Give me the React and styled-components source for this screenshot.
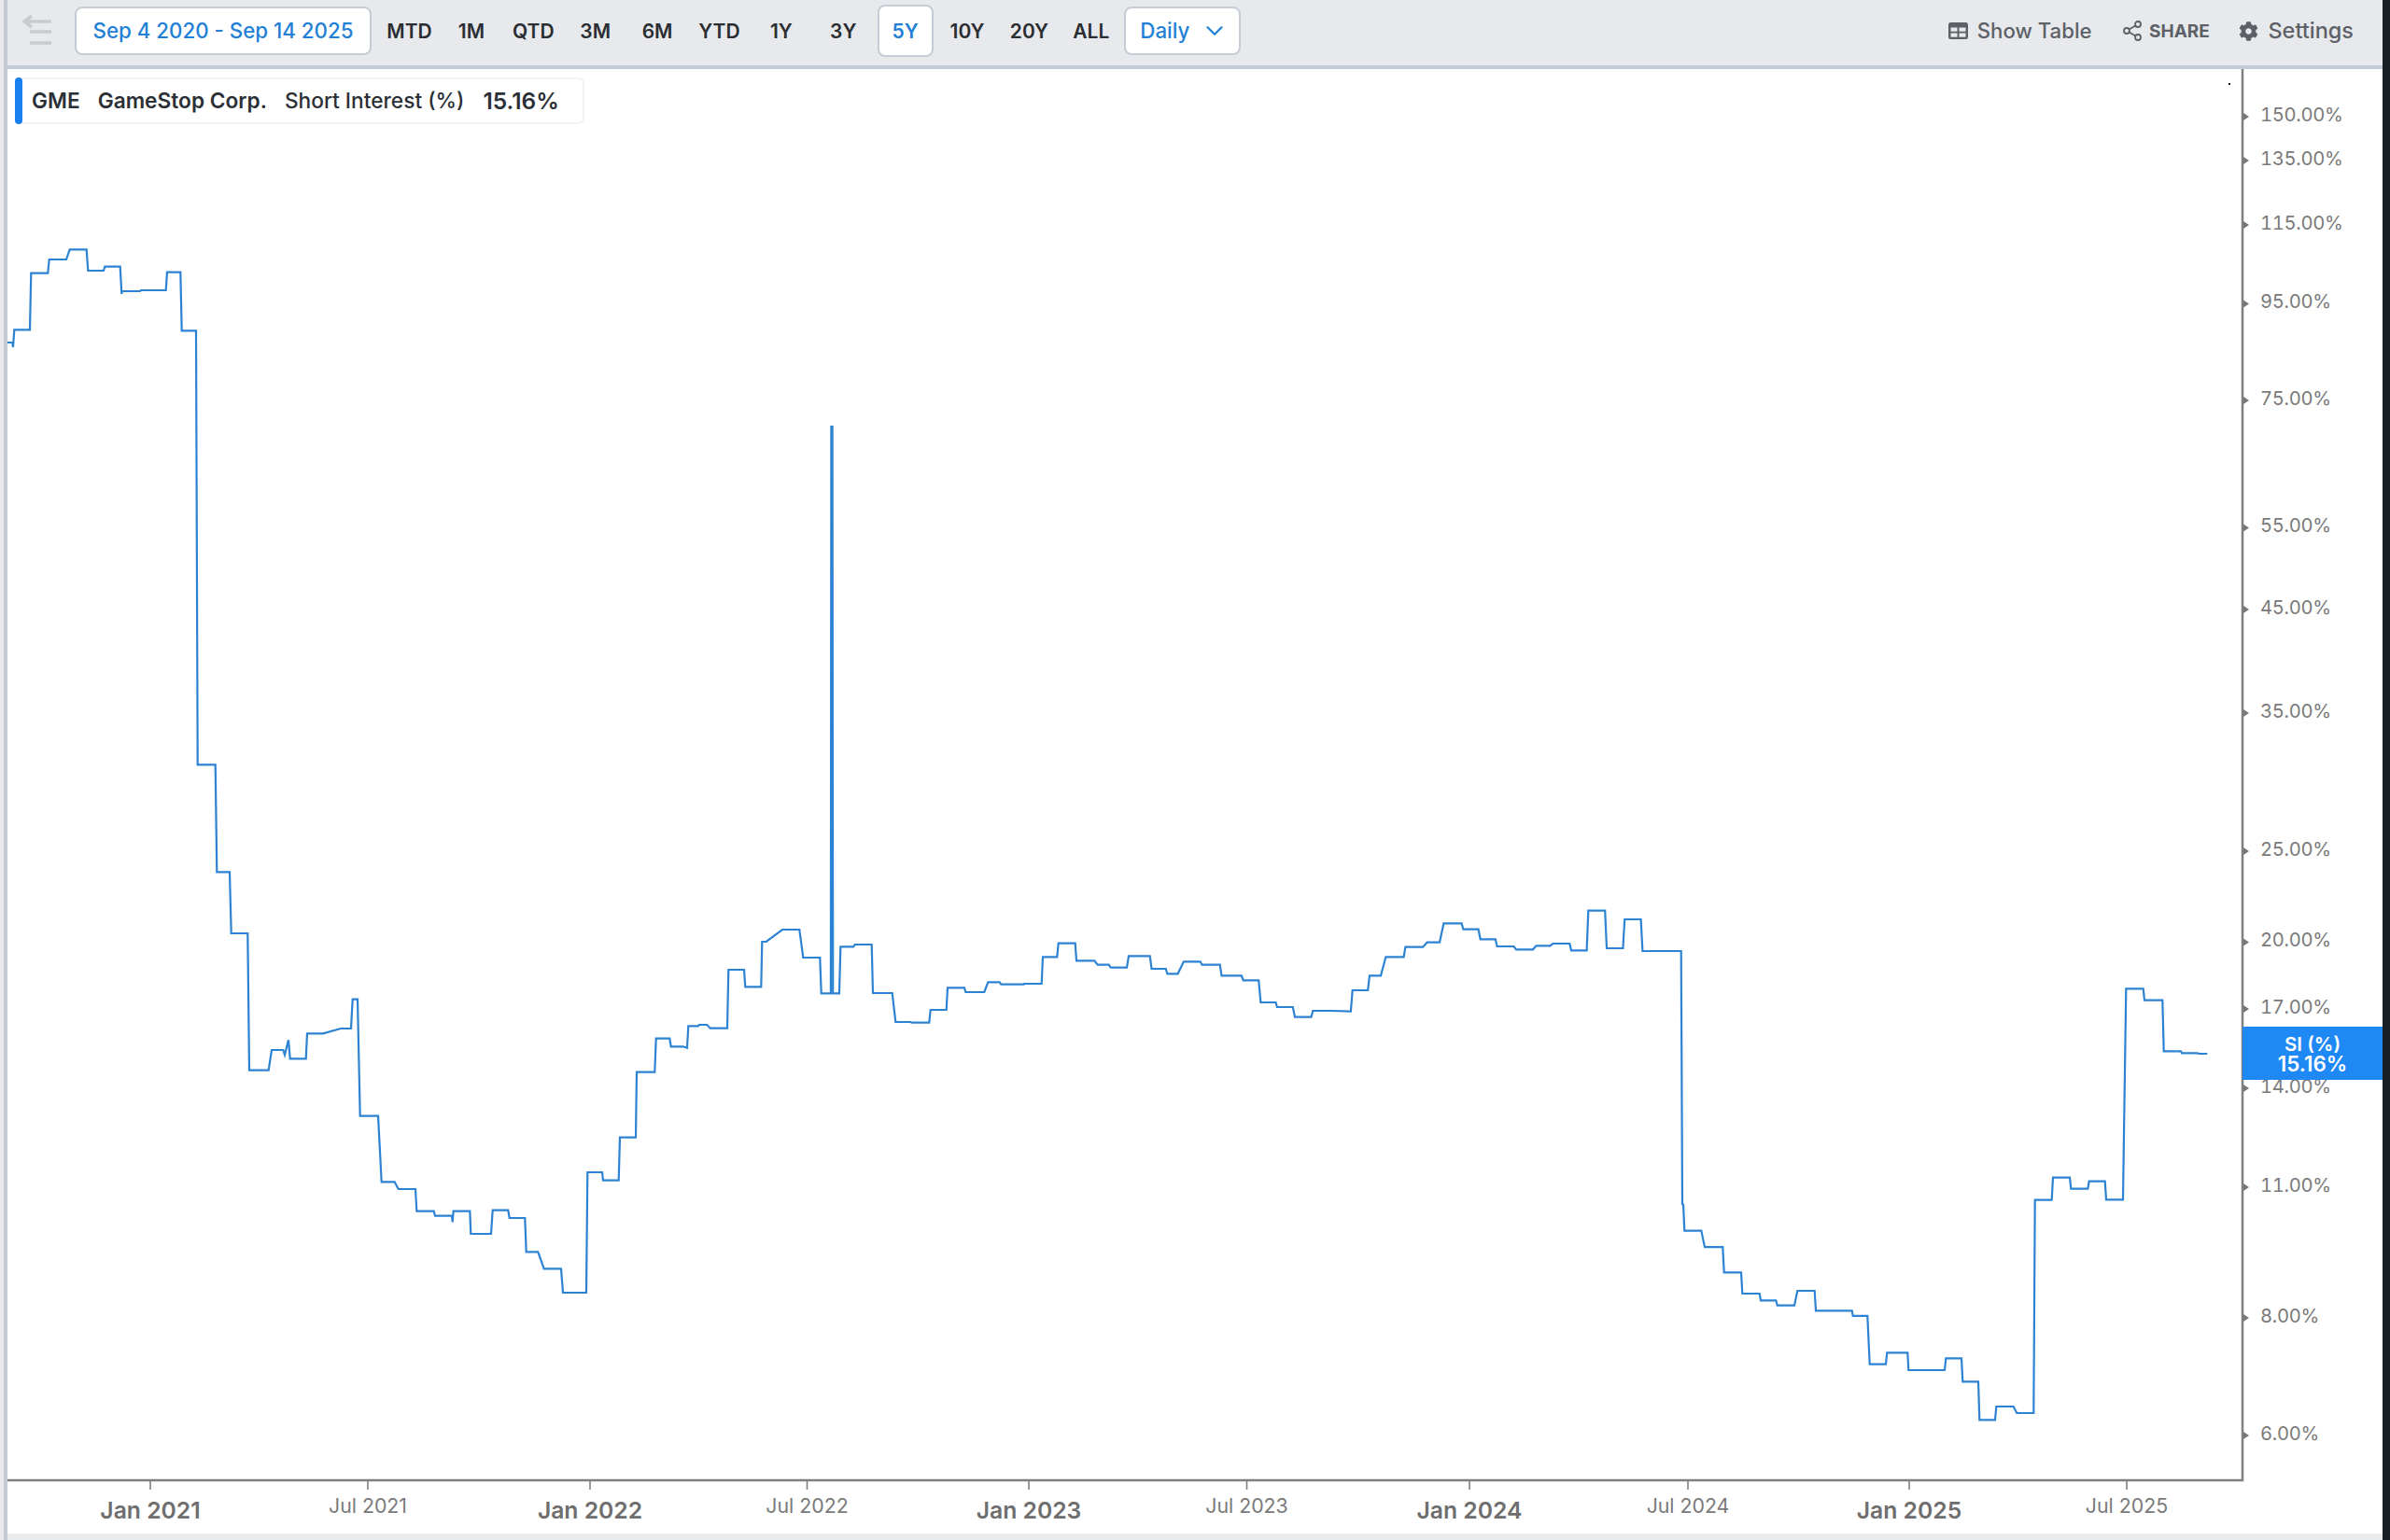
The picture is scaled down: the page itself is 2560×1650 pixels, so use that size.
import React from "react";
import styled, { createGlobalStyle } from "styled-components";
import { Share2, ChevronDown } from "lucide-react";
import { FaCog } from "react-icons/fa";

const Global = createGlobalStyle`
  html, body { margin: 0; padding: 0; background: #fff; }
  body { font-family: Inter, "Liberation Sans", sans-serif; }
  * { box-sizing: border-box; }
`;

const Page = styled.div`
  width: 2560px;
  height: 1650px;
  display: grid;
  grid-template-columns: 8px 1fr 8px;
  overflow: hidden;
`;
const LeftRail = styled.div`
  background: #e7e9ec;
  border-right: 4px solid #c3cad6;
`;
const RightEdge = styled.div`
  background: #1b2025;
`;
const Main = styled.main`
  display: flex;
  flex-direction: column;
  min-width: 0;
`;
const Toolbar = styled.header`
  flex: 0 0 74px;
  display: flex;
  align-items: center;
  padding: 0 31px 4px 15px;
  background: #e7e9ec;
  border-bottom: 4px solid #c3cad6;
`;
const BackIcon = styled.svg`
  width: 32px;
  height: 34px;
  margin-right: 25px;
  flex: none;
`;
const PillButton = styled.button`
  height: 52px;
  padding: 0;
  display: flex;
  align-items: center;
  justify-content: center;
  background: #fff;
  border: 2px solid #c6ccd5;
  border-radius: 8px;
  color: #1f80d6;
  font: 500 22.3px/1 Inter, "Liberation Sans", sans-serif;
  flex: none;
`;
const DateButton = styled(PillButton)`
  width: 318px;
  margin-right: 10.5px;
`;
const IntervalButton = styled(PillButton)`
  width: 125px;
  margin-left: 5.5px;
  gap: 12px;
  padding-left: 15px;
  justify-content: flex-start;
`;
const Periods = styled.div`
  display: flex;
  gap: 6.4px;
  align-items: center;
`;
const Period = styled.button`
  width: 60px;
  height: 56px;
  padding: 0;
  background: ${(p) => (p.$active ? "#fff" : "transparent")};
  border: 2px solid ${(p) => (p.$active ? "#c6ccd5" : "transparent")};
  border-radius: 8px;
  color: ${(p) => (p.$active ? "#1f80d6" : "#2a2d31")};
  font: 600 21px/1 Inter, "Liberation Sans", sans-serif;
  white-space: nowrap;
  display: flex;
  align-items: center;
  justify-content: center;
`;
const Actions = styled.div`
  margin-left: auto;
  display: flex;
  align-items: center;
  gap: 31.5px;
`;
const Action = styled.button`
  display: flex;
  align-items: center;
  gap: ${(p) => p.$gap || 10}px;
  padding: 0;
  background: none;
  border: 0;
  color: #5d6167;
  font: ${(p) => p.$font || "500 22.2px"}/1 Inter, "Liberation Sans", sans-serif;
  white-space: nowrap;
`;
const ChartArea = styled.section`
  position: relative;
  flex: 1;
  background: #fff;
`;
const Plot = styled.svg`
  display: block;
  width: 100%;
  height: 100%;
`;
const Trace = styled.polyline`
  fill: none;
  stroke: #2d83d3;
  stroke-width: 2.2;
  stroke-linejoin: miter;
`;
const AxisLine = styled.line`
  stroke: #808080;
  stroke-width: ${(p) => p.$w || 2.5};
`;
const Tick = styled.polygon`
  fill: #777;
`;
const YLabel = styled.text`
  font: 400 20.2px Inter, "Liberation Sans", sans-serif;
  font-variant-numeric: tabular-nums;
  letter-spacing: -0.3px;
  fill: #7a7a7a;
  dominant-baseline: central;
`;
const XLabel = styled.text`
  font: ${(p) => (p.$major ? "600 24.7px" : "400 21.3px")} Inter, "Liberation Sans", sans-serif;
  fill: ${(p) => (p.$major ? "#6e6e6e" : "#7a7a7a")};
  text-anchor: middle;
  dominant-baseline: central;
`;
const Legend = styled.div`
  position: absolute;
  left: 8px;
  top: 9px;
  width: 610px;
  height: 50px;
  display: flex;
  align-items: center;
  padding-left: 16px;
  border: 2px solid #f1f2f4;
  border-radius: 6px;
  background: #fff;
  color: #2b2f36;
  font: 600 22.7px/1 Inter, "Liberation Sans", sans-serif;
  white-space: nowrap;
`;
const LegendBar = styled.span`
  position: absolute;
  left: -2px;
  top: -2px;
  bottom: -2px;
  width: 8px;
  background: #1a7ff0;
  border-radius: 4px;
`;
const LegendText = styled.span`
  margin-right: ${(p) => p.$mr || 0}px;
  font-weight: ${(p) => p.$weight || 600};
  font-size: ${(p) => p.$size || 22.7}px;
`;
const PriceTag = styled.div`
  position: absolute;
  left: 2394px;
  top: 1026px;
  width: 150px;
  height: 57px;
  display: flex;
  flex-direction: column;
  align-items: center;
  justify-content: center;
  background: #1e88f5;
  color: #fff;
  font: 600 20.5px/21px Inter, "Liberation Sans", sans-serif;
`;
const PriceValue = styled.span`
  font-size: 22.4px;
`;
const BottomStrip = styled.div`
  flex: 0 0 7px;
  background: #e9ebed;
`;

const trace = [
  [8,367],[13.3,367],[14,372],[15.3,353.3],[32,353.3],[33.3,292.7],[51.3,292.7],[52.7,278],[71,278],[74.7,267.3],[92.7,267.3],[94.3,290],[111,290],[112.3,285.7],[128.7,285.7],[130.3,315],[130.7,312],[150,312],[150.7,311],[177.7,311],[179,291.7],[193.3,291.7],[194.7,354.3],[210,354.3],
  [211.7,819.3],[230.7,819.3],[232.3,934.3],[246,934.3],[247.7,1000],[265.3,1000],[267,1146.7],[287.7,1146.7],[291,1125],[303.3,1125],[305,1130.3],[309,1114.3],[310.7,1134.3],[327.7,1134.3],[329,1107.3],[346,1107.3],[365,1102],[376,1102],[377.7,1070.7],[383,1070.7],[385.7,1195.7],[405,1195.7],[408.7,1266.3],[422.7,1266.3],[426.7,1274],[445,1274],[446.3,1297.7],[464.7,1297.7],[466,1302.7],[484,1302.7],[484.7,1309.3],[485.7,1297.7],[503.3,1297.7],[504.3,1322],[526,1322],[527.7,1296.7],[544.3,1296.7],[545.7,1305],[562.3,1305],[563.7,1341.3],[576.3,1341.3],[582.7,1359.3],[601,1359.3],[603,1385],[628,1385],[629.3,1256],[645,1256],[646,1264.7],[662.7,1264.7],[664,1218.7],[681,1218.7],[682,1148.7],[701.3,1148.7],[702.7,1112.7],[717.3,1112.7],[718.7,1121.3],[731.7,1121.3],[736,1122.7],[737.3,1099.3],[747.7,1099.3],[749,1098],[757.3,1098],[760.7,1101.7],[779,1101.7],[780.3,1039],[797,1039],[798.3,1057.3],[815.3,1057.3],[816.3,1009],[820.7,1009],[838,996],[856.3,996],[860.3,1026],[878.3,1026],[879.7,1064.3],[889.9,1064.3],[890.4,457],[891.6,457],[892.2,1064.3],[899,1064.3],[900.3,1014.3],[914,1014.3],[915.7,1012],[933.7,1012],[935,1064],[955.7,1064],[959.3,1095],[975.3,1095],[976.7,1095.7],[995.3,1095.7],[996.7,1082],[1013.7,1082],[1015,1058.3],[1033,1058.3],[1034.3,1063],[1054.3,1063],[1058.3,1052.3],[1070.7,1052.3],[1072.3,1054.7],[1096.7,1054.7],[1097,1054],[1115.7,1054],[1117,1025.3],[1132.3,1025.3],[1133.7,1010.7],[1151.7,1010.7],[1153,1029.3],[1172.3,1029.3],[1175.7,1033.7],[1187.7,1033.7],[1189.7,1036.7],[1207,1036.7],[1209,1024.3],[1231.7,1024.3],[1233.5,1038],[1248.7,1038],[1250.4,1043.3],[1261.6,1043.3],[1267.9,1030.3],[1285.7,1030.3],[1287.5,1033.7],[1306.7,1033.7],[1308.5,1045.3],[1329.9,1045.3],[1331.7,1050.3],[1348.2,1050.3],[1350.4,1074],[1366.5,1074],[1367.9,1079],[1384.8,1079],[1387,1089.7],[1404.5,1089.7],[1406.3,1083],[1426,1083],[1446.9,1083.7],[1448.7,1061],[1465.2,1061],[1467,1045.3],[1479,1045.3],[1484.4,1025.3],[1503.6,1025.3],[1505.4,1014.7],[1524.1,1014.7],[1528.6,1009.7],[1542,1009.7],[1546.4,989.3],[1565.6,989.3],[1567.4,995.7],[1583.5,995.7],[1585.7,1006.3],[1601.8,1006.3],[1603.6,1014],[1621.4,1014],[1624.1,1017.3],[1642,1017.3],[1645.5,1013.3],[1660.3,1013.3],[1663.4,1011],[1681.3,1011],[1683,1018.3],[1699.6,1018.3],[1701.3,975.7],[1719.2,975.7],[1721,1016],[1738.4,1016],[1740.2,985],[1757.6,985],[1759.4,1019],[1800.7,1019],
  [1802,1290],[1803,1290.5],[1804.3,1318.6],[1822.3,1318.6],[1826,1336.2],[1845.3,1336.2],[1846.7,1363.4],[1865,1363.4],[1866.3,1386],[1884.7,1386],[1886,1393.3],[1902.3,1393.3],[1903.7,1398.7],[1922,1398.7],[1925.3,1383],[1943.7,1383],[1945,1404.4],[1983.7,1404.4],[1984.7,1409.8],[2000.3,1409.8],[2002.7,1461.7],[2020,1461.7],[2021.3,1449.3],[2043.3,1449.3],[2044.3,1468],[2083,1468],[2084.3,1455.3],[2101,1455.3],[2102.3,1480.3],[2119,1480.3],[2120.3,1521.3],[2137,1521.3],[2138.3,1507],[2156.7,1507],[2160.3,1514],[2178.3,1514],[2179.7,1285.7],[2197.7,1285.7],[2199,1261.7],[2217,1261.7],[2218.3,1273.7],[2236.3,1273.7],[2237.7,1265.7],[2254.7,1265.7],[2256,1285.3],[2274,1285.3],[2277.3,1059.3],[2295.7,1059.3],[2297,1071.7],[2316.3,1071.7],[2317.7,1126.3],[2336,1126.3],[2337,1128.3],[2354,1128.3],[2355,1129],[2364.3,1129],
];

const yTicks = [
  ["150.00%", 122],["135.00%", 169],["115.00%", 238],["95.00%", 322.5],["75.00%", 426],["55.00%", 562.5],["45.00%", 650],["35.00%", 761],["25.00%", 909],["20.00%", 1006.5],["17.00%", 1078],["14.00%", 1163],["11.00%", 1269],["8.00%", 1409],["6.00%", 1535],
];
const xTicks = [
  ["Jan 2021", 161, true],["Jul 2021", 394],["Jan 2022", 632, true],["Jul 2022", 864.5],["Jan 2023", 1102, true],["Jul 2023", 1335.5],["Jan 2024", 1574, true],["Jul 2024", 1808],["Jan 2025", 2045, true],["Jul 2025", 2278],
];
const periods = ["MTD","1M","QTD","3M","6M","YTD","1Y","3Y","5Y","10Y","20Y","ALL"];

const TableGlyph = () => (
  <svg width="21" height="18" viewBox="0 0 21 18">
    <rect width="21" height="18" rx="2.5" fill="#5d6167" />
    <rect x="2.5" y="5.5" width="7" height="4.2" fill="#e7e9ec" />
    <rect x="11.5" y="5.5" width="7" height="4.2" fill="#e7e9ec" />
    <rect x="2.5" y="11.5" width="7" height="4.2" fill="#e7e9ec" />
    <rect x="11.5" y="11.5" width="7" height="4.2" fill="#e7e9ec" />
  </svg>
);

export default function App() {
  return (
    <Page>
      <Global />
      <LeftRail />
      <Main>
        <Toolbar>
          <BackIcon viewBox="0 0 32 34" fill="none" stroke="#c8cbd0" strokeWidth="3.6">
            <path d="M32 7H3M11 1 3 7l8 6" />
            <path d="M9 18h23M9 30h23" />
          </BackIcon>
          <DateButton>Sep 4 2020 - Sep 14 2025</DateButton>
          <Periods>
            {periods.map((p) => (
              <Period key={p} $active={p === "5Y"}>{p}</Period>
            ))}
          </Periods>
          <IntervalButton>
            Daily
            <ChevronDown size={30} strokeWidth={1.8} />
          </IntervalButton>
          <Actions>
            <Action><TableGlyph />Show Table</Action>
            <Action $font="700 19px" $gap={6}><Share2 size={24} strokeWidth={1.8} />SHARE</Action>
            <Action $font="500 23.5px"><FaCog size={21} />Settings</Action>
          </Actions>
        </Toolbar>
        <ChartArea>
          <Plot viewBox="8 74 2544 1569">
            <Trace points={trace.map((p) => p.join(",")).join(" ")} />
            <AxisLine x1="2402" y1="74" x2="2402" y2="1587" />
            <AxisLine x1="8" y1="1586" x2="2403" y2="1586" />
            <rect x="2387" y="89" width="2" height="2" fill="#111" />
            {yTicks.map(([label, y]) => (
              <g key={label}>
                <Tick points={`2403,${y - 1} 2409,${y + 3} 2403,${y + 7}`} />
                <YLabel x="2421" y={y}>{label}</YLabel>
              </g>
            ))}
            {xTicks.map(([label, x, major]) => (
              <g key={label}>
                <AxisLine $w={1.6} x1={x} y1="1587" x2={x} y2="1596" />
                <XLabel $major={major} x={x} y={major ? 1618 : 1613}>{label}</XLabel>
              </g>
            ))}
          </Plot>
          <Legend>
            <LegendBar />
            <LegendText $mr={19}>GME</LegendText>
            <LegendText $mr={19}>GameStop Corp.</LegendText>
            <LegendText $mr={20} $weight={500}>Short Interest (%)</LegendText>
            <LegendText $size={24.5}>15.16%</LegendText>
          </Legend>
          <PriceTag>
            <span>SI (%)</span>
            <PriceValue>15.16%</PriceValue>
          </PriceTag>
        </ChartArea>
        <BottomStrip />
      </Main>
      <RightEdge />
    </Page>
  );
}
